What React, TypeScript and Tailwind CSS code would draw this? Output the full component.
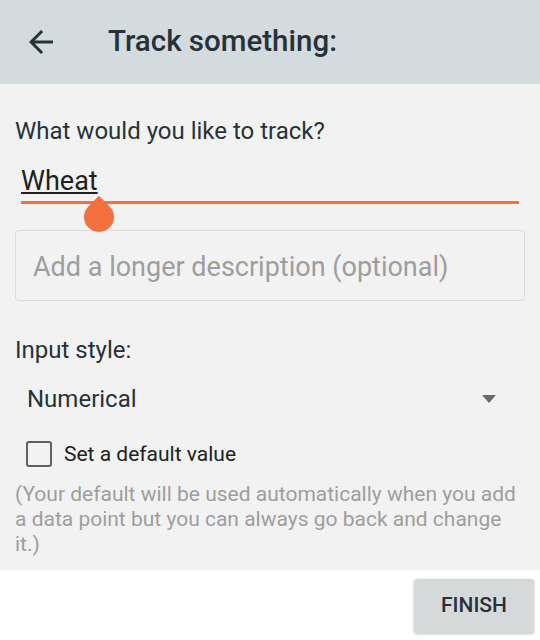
export default function App() {
    return (
        <div className="w-[540px] h-[640px] flex flex-col bg-white font-['Roboto',sans-serif]">
            <header className="h-[84px] shrink-0 bg-[#d3dbdf] flex items-center">
                <svg viewBox="0 0 24 24" className="w-[36px] h-[36px] ml-[23px] fill-[#263238]">
                    <path d="M20 11H7.83l5.59-5.59L12 4l-8 8 8 8 1.41-1.41L7.83 13H20v-2z" />
                </svg>
                <h1 className="ml-[49px] text-[29.5px] font-medium text-[#263238] leading-none">Track something:</h1>
            </header>

            <main className="h-[486px] shrink-0 bg-[#f2f2f2] px-[15px] pt-[33px]">
                <p className="text-[24px] leading-[28px] text-[#263238]">What would you like to track?</p>

                <div className="relative mt-[20px] ml-[6px] mr-[6px] border-b-[3px] border-[#f4703f] pb-[4px]">
                    <span className="text-[27px] leading-[32px] text-[#212121] underline underline-offset-[2px] decoration-2">Wheat</span>
                    <div className="absolute left-[63px] top-[37px] w-[30px] h-[30px] rounded-full rounded-tl-none rotate-45 bg-[#f4703f]" />
                </div>

                <div className="mt-[26px] h-[71px] border border-[#dcdcdc] rounded-[4px] pl-[17px] pt-[20px]">
                    <span className="text-[27px] leading-[32px] text-[#9e9e9e]">Add a longer description (optional)</span>
                </div>

                <p className="mt-[35px] text-[24px] leading-[28px] text-[#263238]">Input style:</p>

                <div className="mt-[21px] flex items-center justify-between pl-[12px] pr-[29px]">
                    <span className="text-[24px] leading-[28px] text-[#263238]">Numerical</span>
                    <div className="w-0 h-0 border-l-[7.5px] border-r-[7.5px] border-t-[8px] border-l-transparent border-r-transparent border-t-[#6b6b6b]" />
                </div>

                <label className="mt-[28px] ml-[11px] flex items-center gap-[12px]">
                    <span className="w-[26px] h-[26px] border-2 border-[#616161] rounded-[3px]" />
                    <span className="text-[21px] leading-[24px] text-[#212121]">Set a default value</span>
                </label>

                <p className="mt-[15px] mr-[4px] text-[21px] leading-[25px] text-[#9e9e9e]">
                    (Your default will be used automatically when you add a data point but you can always go back and change it.)
                </p>
            </main>

            <footer className="flex justify-end pt-[9px] pr-[6px]">
                <button className="w-[120px] h-[54px] bg-[#d6d9da] rounded-[3px] shadow-[0_1px_3px_rgba(0,0,0,0.25)] text-[21px] font-medium text-[#263238]">
                    FINISH
                </button>
            </footer>
        </div>
    );
}
